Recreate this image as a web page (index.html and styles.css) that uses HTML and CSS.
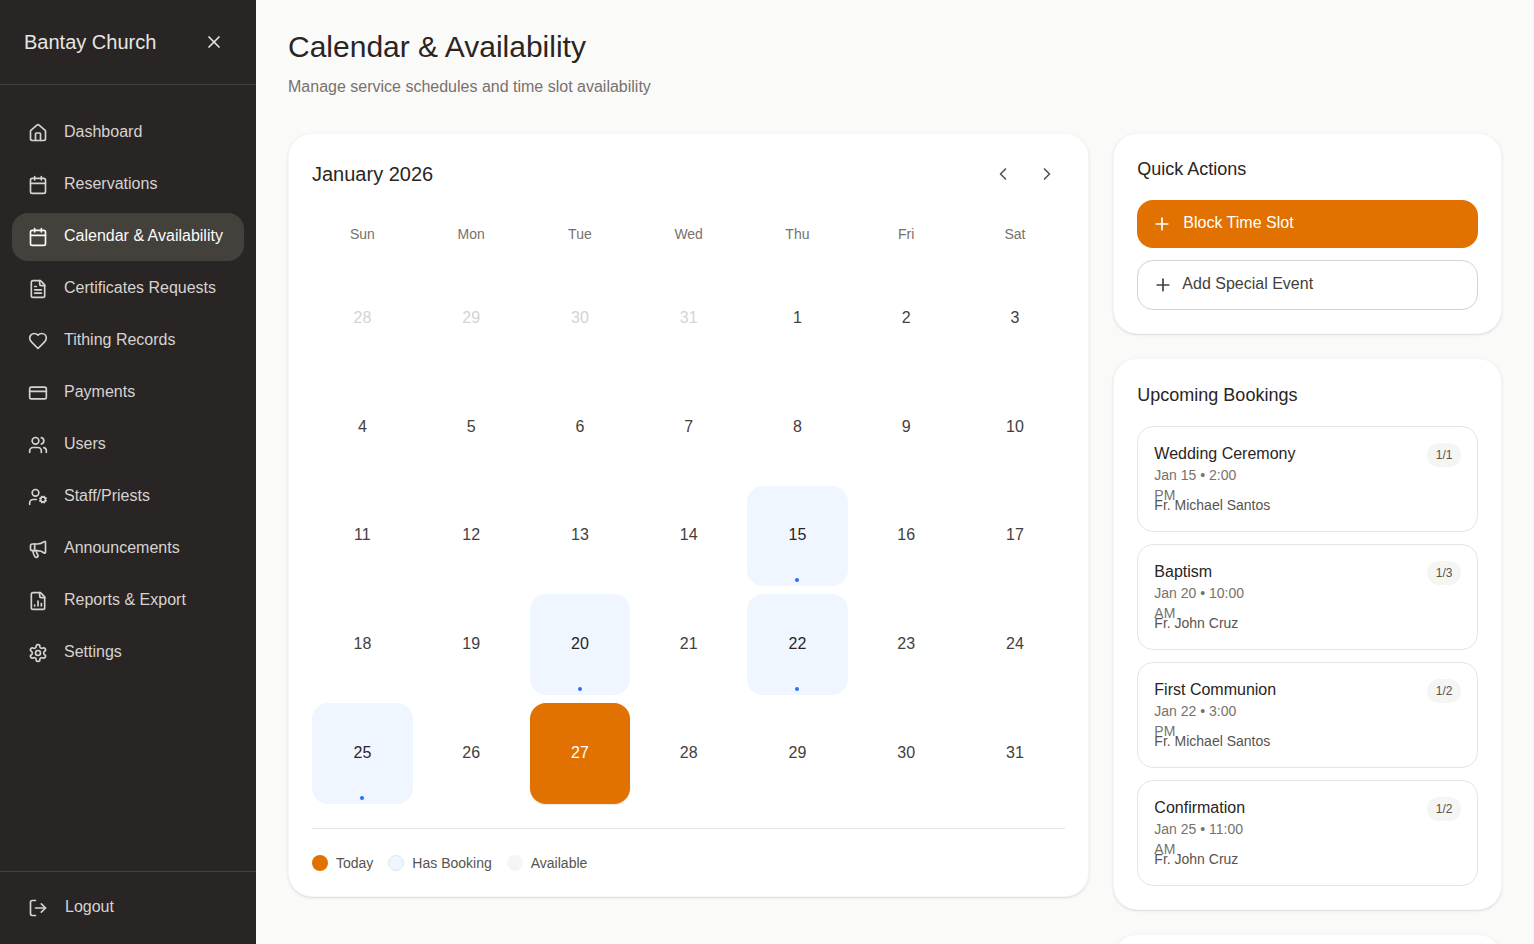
FILE: index.html
```html
<!DOCTYPE html>
<html lang="en">
<head>
  <meta charset="UTF-8">
  <meta name="viewport" content="width=device-width, initial-scale=1.0">
  <title>Calendar &amp; Availability</title>
  <link rel="stylesheet" href="styles.css">
</head>
<body>
  <div class="layout">
    <aside class="sidebar">
      <div class="sidebar-header">
        <span class="brand">Bantay Church</span>
        <svg class="icon close-icon" viewBox="0 0 24 24"><path d="M18 6 6 18"/><path d="m6 6 12 12"/></svg>
      </div>

      <nav class="nav">
        <a class="nav-item">
          <svg class="icon" viewBox="0 0 24 24"><path d="M15 21v-8a1 1 0 0 0-1-1h-4a1 1 0 0 0-1 1v8"/><path d="M3 10a2 2 0 0 1 .709-1.528l7-5.999a2 2 0 0 1 2.582 0l7 5.999A2 2 0 0 1 21 10v9a2 2 0 0 1-2 2H5a2 2 0 0 1-2-2z"/></svg>
          <span>Dashboard</span>
        </a>
        <a class="nav-item">
          <svg class="icon" viewBox="0 0 24 24"><path d="M8 2v4"/><path d="M16 2v4"/><rect x="3" y="4" width="18" height="18" rx="2"/><path d="M3 10h18"/></svg>
          <span>Reservations</span>
        </a>
        <a class="nav-item active">
          <svg class="icon" viewBox="0 0 24 24"><path d="M8 2v4"/><path d="M16 2v4"/><rect x="3" y="4" width="18" height="18" rx="2"/><path d="M3 10h18"/></svg>
          <span>Calendar &amp; Availability</span>
        </a>
        <a class="nav-item">
          <svg class="icon" viewBox="0 0 24 24"><path d="M15 2H6a2 2 0 0 0-2 2v16a2 2 0 0 0 2 2h12a2 2 0 0 0 2-2V7Z"/><path d="M14 2v4a2 2 0 0 0 2 2h4"/><path d="M10 9H8"/><path d="M16 13H8"/><path d="M16 17H8"/></svg>
          <span>Certificates Requests</span>
        </a>
        <a class="nav-item">
          <svg class="icon" viewBox="0 0 24 24"><path d="M19 14c1.49-1.46 3-3.21 3-5.5A5.5 5.5 0 0 0 16.5 3c-1.76 0-3 .5-4.5 2-1.5-1.5-2.74-2-4.5-2A5.5 5.5 0 0 0 2 8.5c0 2.3 1.5 4.05 3 5.5l7 7Z"/></svg>
          <span>Tithing Records</span>
        </a>
        <a class="nav-item">
          <svg class="icon" viewBox="0 0 24 24"><rect x="2" y="5" width="20" height="14" rx="2"/><path d="M2 10h20"/></svg>
          <span>Payments</span>
        </a>
        <a class="nav-item">
          <svg class="icon" viewBox="0 0 24 24"><path d="M16 21v-2a4 4 0 0 0-4-4H6a4 4 0 0 0-4 4v2"/><circle cx="9" cy="7" r="4"/><path d="M22 21v-2a4 4 0 0 0-3-3.87"/><path d="M16 3.13a4 4 0 0 1 0 7.75"/></svg>
          <span>Users</span>
        </a>
        <a class="nav-item">
          <svg class="icon" viewBox="0 0 24 24"><circle cx="18" cy="15" r="3"/><circle cx="9" cy="7" r="4"/><path d="M10 15H6a4 4 0 0 0-4 4v2"/><path d="m21.7 16.4-.9-.3"/><path d="m15.2 13.9-.9-.3"/><path d="m16.6 18.7.3-.9"/><path d="m19.1 12.2.3-.9"/><path d="m19.6 18.7-.4-1"/><path d="m16.8 12.3-.4-1"/><path d="m14.3 16.6 1-.4"/><path d="m20.7 13.8 1-.4"/></svg>
          <span>Staff/Priests</span>
        </a>
        <a class="nav-item">
          <svg class="icon" viewBox="0 0 24 24"><path d="M11 6a13 13 0 0 0 8.4-2.8A1 1 0 0 1 21 4v12a1 1 0 0 1-1.6.8A13 13 0 0 0 11 14H5a2 2 0 0 1-2-2V8a2 2 0 0 1 2-2z"/><path d="M6 14a12 12 0 0 0 2.4 7.2 2 2 0 0 0 3.2-2.4A8 8 0 0 1 10 14"/><path d="M8 6v8"/></svg>
          <span>Announcements</span>
        </a>
        <a class="nav-item">
          <svg class="icon" viewBox="0 0 24 24"><path d="M15 2H6a2 2 0 0 0-2 2v16a2 2 0 0 0 2 2h12a2 2 0 0 0 2-2V7Z"/><path d="M14 2v4a2 2 0 0 0 2 2h4"/><path d="M8 18v-1"/><path d="M12 18v-6"/><path d="M16 18v-3"/></svg>
          <span>Reports &amp; Export</span>
        </a>
        <a class="nav-item">
          <svg class="icon" viewBox="0 0 24 24"><path d="M12.22 2h-.44a2 2 0 0 0-2 2v.18a2 2 0 0 1-1 1.73l-.43.25a2 2 0 0 1-2 0l-.15-.08a2 2 0 0 0-2.73.73l-.22.38a2 2 0 0 0 .73 2.73l.15.1a2 2 0 0 1 1 1.72v.51a2 2 0 0 1-1 1.74l-.15.09a2 2 0 0 0-.73 2.73l.22.38a2 2 0 0 0 2.73.73l.15-.08a2 2 0 0 1 2 0l.43.25a2 2 0 0 1 1 1.73V20a2 2 0 0 0 2 2h.44a2 2 0 0 0 2-2v-.18a2 2 0 0 1 1-1.73l.43-.25a2 2 0 0 1 2 0l.15.08a2 2 0 0 0 2.73-.73l.22-.39a2 2 0 0 0-.73-2.73l-.15-.08a2 2 0 0 1-1-1.74v-.5a2 2 0 0 1 1-1.74l.15-.09a2 2 0 0 0 .73-2.73l-.22-.38a2 2 0 0 0-2.73-.73l-.15.08a2 2 0 0 1-2 0l-.43-.25a2 2 0 0 1-1-1.73V4a2 2 0 0 0-2-2z"/><circle cx="12" cy="12" r="3"/></svg>
          <span>Settings</span>
        </a>
      </nav>

      <div class="sidebar-footer">
        <a class="nav-item logout">
          <svg class="icon" viewBox="0 0 24 24"><path d="M9 21H5a2 2 0 0 1-2-2V5a2 2 0 0 1 2-2h4"/><path d="m16 17 5-5-5-5"/><path d="M21 12H9"/></svg>
          <span>Logout</span>
        </a>
      </div>
    </aside>

    <main class="main">
      <div class="page-header">
        <h1>Calendar &amp; Availability</h1>
        <p>Manage service schedules and time slot availability</p>
      </div>

      <div class="content-grid">
        <section class="card calendar-card">
          <div class="calendar-header">
            <h2>January 2026</h2>
            <div class="calendar-nav">
              <button class="nav-btn"><svg class="icon" viewBox="0 0 24 24"><path d="m15 18-6-6 6-6"/></svg></button>
              <button class="nav-btn"><svg class="icon" viewBox="0 0 24 24"><path d="m9 18 6-6-6-6"/></svg></button>
            </div>
          </div>

          <div class="weekdays">
            <div>Sun</div><div>Mon</div><div>Tue</div><div>Wed</div><div>Thu</div><div>Fri</div><div>Sat</div>
          </div>

          <div class="days">
            <div class="day muted">28</div>
            <div class="day muted">29</div>
            <div class="day muted">30</div>
            <div class="day muted">31</div>
            <div class="day">1</div>
            <div class="day">2</div>
            <div class="day">3</div>
            <div class="day">4</div>
            <div class="day">5</div>
            <div class="day">6</div>
            <div class="day">7</div>
            <div class="day">8</div>
            <div class="day">9</div>
            <div class="day">10</div>
            <div class="day">11</div>
            <div class="day">12</div>
            <div class="day">13</div>
            <div class="day">14</div>
            <div class="day booked">15<span class="dot"></span></div>
            <div class="day">16</div>
            <div class="day">17</div>
            <div class="day">18</div>
            <div class="day">19</div>
            <div class="day booked">20<span class="dot"></span></div>
            <div class="day">21</div>
            <div class="day booked">22<span class="dot"></span></div>
            <div class="day">23</div>
            <div class="day">24</div>
            <div class="day booked">25<span class="dot"></span></div>
            <div class="day">26</div>
            <div class="day today">27</div>
            <div class="day">28</div>
            <div class="day">29</div>
            <div class="day">30</div>
            <div class="day">31</div>
          </div>

          <div class="legend">
            <div class="legend-item"><span class="swatch swatch-today"></span>Today</div>
            <div class="legend-item"><span class="swatch swatch-booking"></span>Has Booking</div>
            <div class="legend-item"><span class="swatch swatch-available"></span>Available</div>
          </div>
        </section>

        <div class="side-column">
          <section class="card">
            <h3>Quick Actions</h3>
            <div class="actions">
              <button class="action-btn primary">
                <svg class="icon" viewBox="0 0 24 24"><path d="M5 12h14"/><path d="M12 5v14"/></svg>
                <span>Block Time Slot</span>
              </button>
              <button class="action-btn outline">
                <svg class="icon" viewBox="0 0 24 24"><path d="M5 12h14"/><path d="M12 5v14"/></svg>
                <span>Add Special Event</span>
              </button>
            </div>
          </section>

          <section class="card">
            <h3 class="bookings-title">Upcoming Bookings</h3>
            <div class="bookings">
              <div class="booking">
                <div class="booking-info">
                  <div class="booking-name">Wedding Ceremony</div>
                  <div class="booking-date">Jan 15 • 2:00 PM</div>
                  <div class="booking-priest">Fr. Michael Santos</div>
                </div>
                <span class="badge">1/1</span>
              </div>
              <div class="booking">
                <div class="booking-info">
                  <div class="booking-name">Baptism</div>
                  <div class="booking-date">Jan 20 • 10:00 AM</div>
                  <div class="booking-priest">Fr. John Cruz</div>
                </div>
                <span class="badge">1/3</span>
              </div>
              <div class="booking">
                <div class="booking-info">
                  <div class="booking-name">First Communion</div>
                  <div class="booking-date">Jan 22 • 3:00 PM</div>
                  <div class="booking-priest">Fr. Michael Santos</div>
                </div>
                <span class="badge">1/2</span>
              </div>
              <div class="booking">
                <div class="booking-info">
                  <div class="booking-name">Confirmation</div>
                  <div class="booking-date">Jan 25 • 11:00 AM</div>
                  <div class="booking-priest">Fr. John Cruz</div>
                </div>
                <span class="badge">1/2</span>
              </div>
            </div>
          </section>

          <section class="card empty-card"></section>
        </div>
      </div>
    </main>
  </div>
</body>
</html>
```

FILE: styles.css
```css
:root {
  --stone-50: #fafaf9;
  --stone-100: #f5f5f4;
  --stone-200: #e7e5e4;
  --stone-300: #d6d3d1;
  --stone-500: #78716c;
  --stone-600: #57534e;
  --stone-700: #44403c;
  --stone-800: #292524;
  --orange: #e17100;
  --blue-50: #eff6ff;
  --blue-500: #2b6ff0;
}

* {
  margin: 0;
  padding: 0;
  box-sizing: border-box;
  font-family: 'Liberation Sans', Arial, sans-serif;
}

html, body {
  height: 100%;
  overflow: hidden;
}

body {
  background-color: var(--stone-50);
  color: var(--stone-800);
}

.layout {
  display: flex;
  height: 100vh;
}

.icon {
  width: 20px;
  height: 20px;
  flex-shrink: 0;
  fill: none;
  stroke: currentColor;
  stroke-width: 2;
  stroke-linecap: round;
  stroke-linejoin: round;
}

/* Sidebar */
.sidebar {
  width: 256px;
  flex-shrink: 0;
  display: flex;
  flex-direction: column;
  background-color: var(--stone-800);
  color: var(--stone-300);
}

.sidebar-header {
  height: 85px;
  padding: 0 32px 0 24px;
  display: flex;
  align-items: center;
  justify-content: space-between;
  border-bottom: 1px solid var(--stone-700);
}

.brand {
  font-size: 20px;
  color: var(--stone-200);
}

.close-icon {
  color: var(--stone-200);
}

.nav {
  flex: 1;
  padding: 24px 12px;
  display: flex;
  flex-direction: column;
  gap: 4px;
}

.nav-item {
  height: 48px;
  padding: 0 16px;
  display: flex;
  align-items: center;
  gap: 16px;
  border-radius: 16px;
  font-size: 16px;
}

.nav-item span {
  position: relative;
  top: -1px;
}

.nav-item.active {
  background-color: var(--stone-700);
  color: var(--stone-50);
}

.sidebar-footer {
  padding: 12px;
  border-top: 1px solid var(--stone-700);
}

.logout {
  gap: 17px;
}

/* Main */
.main {
  flex: 1;
  padding: 32px;
  min-width: 0;
}

.page-header {
  margin-bottom: 35px;
}

.page-header h1 {
  font-size: 30px;
  font-weight: 400;
  line-height: 30px;
  margin-bottom: 14px;
}

.page-header p {
  font-size: 16px;
  line-height: 22px;
  color: var(--stone-500);
}

.content-grid {
  display: grid;
  grid-template-columns: repeat(3, 1fr);
  gap: 24px;
  align-items: start;
}

.card {
  background-color: #ffffff;
  border: 1px solid rgba(231, 229, 228, 0.3);
  border-radius: 24px;
  padding: 23px;
  box-shadow: 0 1px 3px 0 rgba(0, 0, 0, 0.1), 0 1px 2px -1px rgba(0, 0, 0, 0.1);
}

.calendar-card {
  grid-column: span 2;
}

.calendar-header {
  height: 36px;
  margin-bottom: 24px;
  display: flex;
  align-items: center;
  justify-content: space-between;
}

.calendar-header h2 {
  font-size: 20px;
  font-weight: 400;
  position: relative;
  top: -1px;
}

.calendar-nav {
  display: flex;
  gap: 8px;
  margin-bottom: 2px;
}

.nav-btn {
  width: 36px;
  height: 36px;
  display: flex;
  align-items: center;
  justify-content: center;
  background: none;
  border: none;
  color: var(--stone-600);
}

.weekdays {
  display: grid;
  grid-template-columns: repeat(7, 1fr);
  gap: 8px;
  margin-bottom: 17px;
}

.weekdays div {
  text-align: center;
  font-size: 14px;
  line-height: 34px;
  color: var(--stone-500);
}

.days {
  display: grid;
  grid-template-columns: repeat(7, 1fr);
  gap: 8px;
}

.day {
  aspect-ratio: 1;
  position: relative;
  display: flex;
  align-items: center;
  justify-content: center;
  border-radius: 16px;
  font-size: 16px;
  color: var(--stone-700);
  padding-bottom: 1px;
}

.day.muted {
  color: var(--stone-300);
}

.day.booked {
  background-color: var(--blue-50);
  color: var(--stone-800);
}

.day.today {
  background-color: var(--orange);
  color: #ffffff;
  box-shadow: 0 1px 2px rgba(0, 0, 0, 0.1);
}

.dot {
  position: absolute;
  left: 50%;
  bottom: 4px;
  width: 4px;
  height: 4px;
  margin-left: -2px;
  border-radius: 50%;
  background-color: var(--blue-500);
}

.legend {
  margin-top: 24px;
  padding-top: 24px;
  border-top: 1px solid var(--stone-200);
  display: flex;
  gap: 15px;
}

.legend-item {
  display: flex;
  align-items: center;
  gap: 8px;
  font-size: 14px;
  line-height: 20px;
  color: var(--stone-600);
}

.swatch {
  width: 16px;
  height: 16px;
  border-radius: 50%;
}

.swatch-today {
  background-color: var(--orange);
}

.swatch-booking {
  background-color: var(--blue-50);
  border: 1px solid var(--stone-200);
}

.swatch-available {
  background-color: var(--stone-100);
  border: 1px solid var(--stone-100);
}

/* Right column */
.side-column {
  display: flex;
  flex-direction: column;
  gap: 24px;
}

.side-column h3 {
  font-size: 18px;
  font-weight: 400;
  line-height: 24px;
  margin-bottom: 19px;
}

.actions {
  display: flex;
  flex-direction: column;
  gap: 12px;
}

.action-btn {
  display: flex;
  align-items: center;
  border-radius: 16px;
  font-size: 16px;
  text-align: left;
}

.action-btn span {
  position: relative;
  top: -1px;
}

.action-btn.primary {
  height: 48px;
  padding: 0 15px;
  gap: 11px;
  border: none;
  background-color: var(--orange);
  color: #ffffff;
}

.action-btn.outline {
  height: 50px;
  padding: 0 15px;
  gap: 9px;
  border: 1px solid var(--stone-300);
  background-color: #ffffff;
  color: var(--stone-700);
}

.side-column .bookings-title {
  line-height: 26px;
  margin-bottom: 18px;
}

.bookings {
  display: flex;
  flex-direction: column;
  gap: 12px;
}

.booking {
  height: 106px;
  padding: 16px;
  border: 1px solid var(--stone-200);
  border-radius: 16px;
  display: flex;
  justify-content: space-between;
  align-items: flex-start;
}

.booking-info {
  width: 100px;
}

.booking-name {
  font-size: 16px;
  line-height: 22px;
  white-space: nowrap;
}

/* the date wraps in its narrow column and runs under the priest line */
.booking-date {
  font-size: 14px;
  line-height: 20px;
  height: 30px;
  color: var(--stone-500);
}

.booking-priest {
  font-size: 14px;
  line-height: 20px;
  white-space: nowrap;
  color: var(--stone-600);
}

.badge {
  padding: 0 8.5px;
  height: 24px;
  line-height: 24px;
  border-radius: 12px;
  background-color: var(--stone-100);
  font-size: 12px;
  color: var(--stone-600);
}

.empty-card {
  height: 200px;
}
```
